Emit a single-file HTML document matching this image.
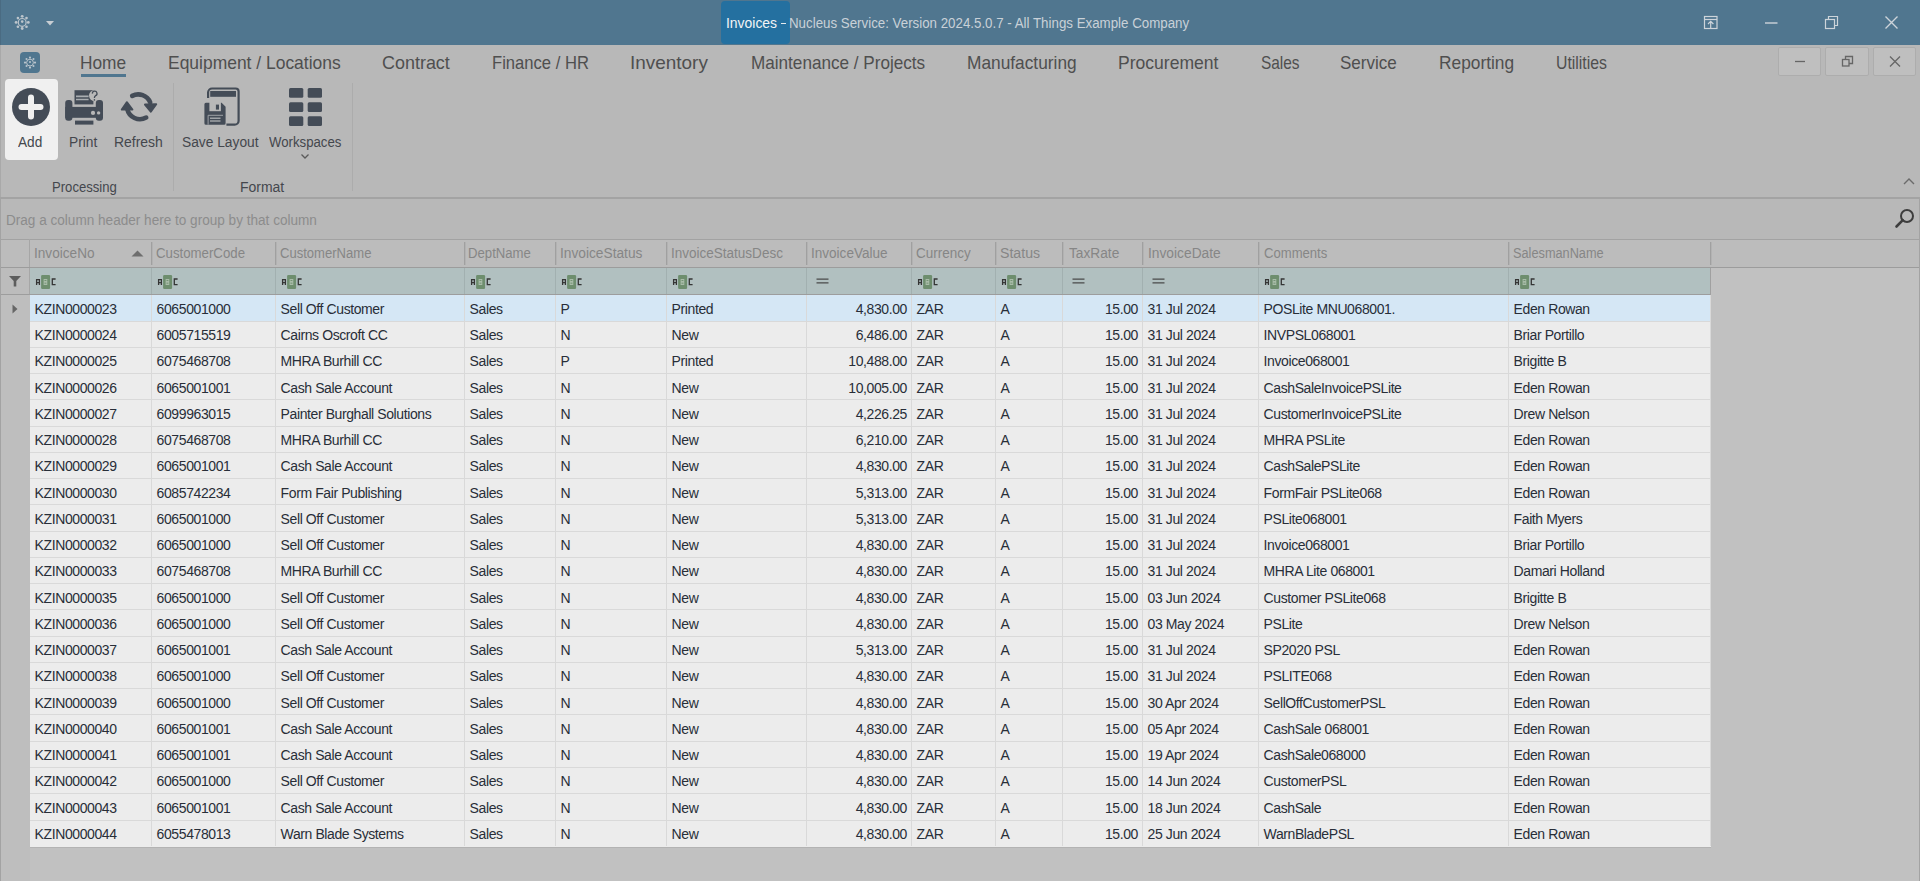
<!DOCTYPE html>
<html><head><meta charset="utf-8"><style>
html,body{margin:0;padding:0;}
body{width:1920px;height:881px;overflow:hidden;position:relative;background:#b8b8b8;font-family:"Liberation Sans",sans-serif;}
.a{position:absolute;}
.t{position:absolute;white-space:pre;line-height:1;}
.tab{font-size:18.2px;color:#4a4a4a;letter-spacing:0px;}
.cell{font-size:14px;color:#282e38;letter-spacing:-0.4px;}
.hdr{font-size:14px;color:#8a8a8a;letter-spacing:-0.12px;}
.lbl{font-size:14px;color:#44474d;letter-spacing:-0.3px;}
</style></head><body>

<div class="a" style="left:0;top:0;width:1920px;height:45px;background:#50768f;"></div>
<div class="a" style="left:0;top:0;width:1px;height:45px;background:#4a6b82;"></div>
<svg class="a" style="left:14px;top:14px" width="17" height="17" viewBox="0 0 17 17">
<g fill="#bcc5cc">
<circle cx="8.2" cy="2.3" r="1.4"/><circle cx="8.2" cy="14.5" r="1.4"/><circle cx="2.1" cy="8.4" r="1.4"/><circle cx="14.3" cy="8.4" r="1.4"/>
<circle cx="3.9" cy="4.1" r="1.3"/><circle cx="12.5" cy="4.1" r="1.3"/><circle cx="3.9" cy="12.7" r="1.3"/><circle cx="12.5" cy="12.7" r="1.3"/>
</g><circle cx="8.2" cy="8.4" r="3.9" fill="none" stroke="#bcc5cc" stroke-width="1.2"/><circle cx="8.2" cy="7.6" r="1.3" fill="#bcc5cc"/>
</svg>
<svg class="a" style="left:46px;top:21px" width="8" height="5" viewBox="0 0 8 5"><path d="M0 0H8L4 4.5Z" fill="#c8ced4"/></svg>
<div class="a" style="left:721px;top:1px;width:69px;height:43px;background:#2470a0;border-radius:4px;"></div>
<div class="t" style="left:726.21px;top:15.5px;font-size:14px;color:#f2f4f6;transform:scaleX(0.9940);transform-origin:0 0;">Invoices</div>
<div class="a" style="left:781px;top:23px;width:5px;height:1.3px;background:#e6eaee;"></div>
<div class="t" style="left:789.05px;top:15.5px;font-size:14px;color:#c9d1d8;transform:scaleX(0.9510);transform-origin:0 0;">Nucleus Service: Version 2024.5.0.7 - All Things Example Company</div>
<svg class="a" style="left:1700px;top:12px" width="210" height="22" viewBox="0 0 210 22">
<g fill="none" stroke="#cdd4da" stroke-width="1.2">
<rect x="4.5" y="4.5" width="12.5" height="12"/><path d="M4.5 7.5H17"/><path d="M10.7 16.5V9.5M8 12L10.7 9.3L13.4 12"/>
<path d="M65 11H77.5" stroke-width="1.4"/>
<rect x="125.5" y="7.5" width="9" height="9"/><path d="M128.5 7.5V4.5H137.5V13.5H134.5"/>
<path d="M185.5 4.5L197.5 16.5M197.5 4.5L185.5 16.5" stroke-width="1.4"/>
</g></svg>
<div class="a" style="left:0;top:45px;width:1px;height:153px;background:#a9a9a9;"></div>
<div class="a" style="left:20px;top:52px;width:20px;height:21px;background:#50768f;border-radius:4px;"></div>
<svg class="a" style="left:23px;top:56px" width="14" height="14" viewBox="0 0 14 14">
<g fill="#b9c4cc"><circle cx="7" cy="1.6" r="1.1"/><circle cx="7" cy="11.6" r="1.1"/><circle cx="2" cy="6.6" r="1.1"/><circle cx="12" cy="6.6" r="1.1"/>
<circle cx="3.5" cy="3.1" r="1"/><circle cx="10.5" cy="3.1" r="1"/><circle cx="3.5" cy="10.1" r="1"/><circle cx="10.5" cy="10.1" r="1"/></g>
<circle cx="7" cy="6.6" r="3.4" fill="none" stroke="#b9c4cc" stroke-width="1"/><circle cx="7" cy="6" r="1" fill="#b9c4cc"/></svg>
<div class="t" style="left:80.35px;top:53.5px;font-size:18.2px;color:#4f4f4f;transform:scaleX(0.9511);transform-origin:0 0;">Home</div>
<div class="t" style="left:168.44px;top:53.5px;font-size:18.2px;color:#4f4f4f;transform:scaleX(0.9596);transform-origin:0 0;">Equipment / Locations</div>
<div class="t" style="left:381.51px;top:53.5px;font-size:18.2px;color:#4f4f4f;transform:scaleX(0.9868);transform-origin:0 0;">Contract</div>
<div class="t" style="left:492.49px;top:53.5px;font-size:18.2px;color:#4f4f4f;transform:scaleX(0.9135);transform-origin:0 0;">Finance / HR</div>
<div class="t" style="left:630.12px;top:53.5px;font-size:18.2px;color:#4f4f4f;transform:scaleX(1.0411);transform-origin:0 0;">Inventory</div>
<div class="t" style="left:750.76px;top:53.5px;font-size:18.2px;color:#4f4f4f;transform:scaleX(0.9413);transform-origin:0 0;">Maintenance / Projects</div>
<div class="t" style="left:966.95px;top:53.5px;font-size:18.2px;color:#4f4f4f;transform:scaleX(0.9513);transform-origin:0 0;">Manufacturing</div>
<div class="t" style="left:1118.23px;top:53.5px;font-size:18.2px;color:#4f4f4f;transform:scaleX(0.9650);transform-origin:0 0;">Procurement</div>
<div class="t" style="left:1260.75px;top:53.5px;font-size:18.2px;color:#4f4f4f;transform:scaleX(0.8477);transform-origin:0 0;">Sales</div>
<div class="t" style="left:1340.06px;top:53.5px;font-size:18.2px;color:#4f4f4f;transform:scaleX(0.9364);transform-origin:0 0;">Service</div>
<div class="t" style="left:1438.75px;top:53.5px;font-size:18.2px;color:#4f4f4f;transform:scaleX(0.9519);transform-origin:0 0;">Reporting</div>
<div class="t" style="left:1556.03px;top:53.5px;font-size:18.2px;color:#4f4f4f;transform:scaleX(0.8684);transform-origin:0 0;">Utilities</div>
<div class="a" style="left:81px;top:74px;width:45px;height:3px;background:#50768f;"></div>
<div class="a" style="left:1778px;top:47px;width:43px;height:29px;background:#bfbfbf;border:1px solid #adadad;border-radius:2px;box-sizing:border-box;"></div>
<div class="a" style="left:1825px;top:47px;width:44px;height:29px;background:#bfbfbf;border:1px solid #adadad;border-radius:2px;box-sizing:border-box;"></div>
<div class="a" style="left:1873px;top:47px;width:43px;height:29px;background:#bfbfbf;border:1px solid #adadad;border-radius:2px;box-sizing:border-box;"></div>
<svg class="a" style="left:1779px;top:47px" width="141" height="28" viewBox="0 0 141 28">
<g fill="none" stroke="#666" stroke-width="1.3">
<path d="M16 14.5H26"/>
<rect x="63.5" y="12.5" width="6.5" height="6.5"/><path d="M66.5 12.5V9.5H73.5V16.5H70"/>
<path d="M111 9.5L121 19.5M121 9.5L111 19.5"/>
</g></svg>
<div class="a" style="left:5px;top:79px;width:53px;height:81px;background:#f0f0f0;border-radius:4px;"></div>
<svg class="a" style="left:12px;top:88px" width="38" height="38" viewBox="0 0 38 38">
<circle cx="19" cy="19" r="19" fill="#444c57"/><path d="M19 9.5V28.5M9.5 19H28.5" stroke="#f0f0f0" stroke-width="6" stroke-linecap="round"/></svg>
<svg class="a" style="left:60px;top:85px" width="50" height="45" viewBox="0 0 50 45">
<path d="M14.5 5.2H33.4V19.4H14.5Z" fill="#444c57"/>
<path d="M16 11.3H28.6M16 14.5H28.6" stroke="#a9adb1" stroke-width="1.7"/>
<circle cx="34.6" cy="10.6" r="5.6" fill="#b8b8b8"/>
<path d="M32.4 8.6A2.3 2.3 0 1 1 35.6 10.6Q34.4 11.3 34.4 13" fill="none" stroke="#444c57" stroke-width="1.3"/>
<circle cx="34.4" cy="14.9" r="0.8" fill="#444c57"/>
<rect x="5.2" y="15" width="7.2" height="20.8" rx="3" fill="#444c57"/>
<rect x="35.8" y="15" width="7.2" height="20.8" rx="3" fill="#444c57"/>
<rect x="5.2" y="21.9" width="37.8" height="10.9" fill="#444c57"/>
<circle cx="33" cy="27.9" r="2.1" fill="#b8b8b8"/><circle cx="38.6" cy="27.9" r="1.7" fill="#b8b8b8"/>
<rect x="15" y="35.6" width="18.4" height="4" fill="#444c57"/>
</svg>
<svg class="a" style="left:60px;top:85px" width="105" height="45" viewBox="0 0 105 45">
<g fill="none" stroke="#444c57" stroke-width="4.6" stroke-linecap="round">
<path d="M72.2 10.9A13 13 0 0 1 90.2 17.4"/>
<path d="M86.2 32.6A13 13 0 0 1 67.2 23.8"/>
</g>
<path d="M85 19.6L96.2 19.2L90.8 26.6Z" fill="#444c57" stroke="#444c57" stroke-width="2" stroke-linejoin="round"/>
<path d="M61.8 24.6L72.4 24.6L66.8 17.2Z" fill="#444c57" stroke="#444c57" stroke-width="2" stroke-linejoin="round"/>
</svg>
<svg class="a" style="left:200px;top:84px" width="45" height="46" viewBox="0 0 45 46">
<path d="M8.1 14.1V8.5A4 4 0 0 1 12.1 4.5H35.6A3 3 0 0 1 38.6 7.5V36.7A4 4 0 0 1 34.6 40.7H26.4" fill="none" stroke="#444c57" stroke-width="2.2"/>
<rect x="10.2" y="7" width="25.8" height="5.8" fill="#444c57"/>
<path d="M5.9 18.8H21.6L25.6 22.8V39.2A1.5 1.5 0 0 1 24.1 40.7H5.9A1.5 1.5 0 0 1 4.4 39.2V20.3A1.5 1.5 0 0 1 5.9 18.8Z" fill="#444c57"/>
<rect x="9.4" y="18" width="11.5" height="9.2" fill="#b8b8b8"/>
<rect x="15.9" y="20.6" width="3.1" height="5" fill="#444c57"/>
<path d="M8.1 40.7V31.3H23" fill="none" stroke="#9ea2a6" stroke-width="1"/>
<path d="M10 34.2H20.5M10 37H20.5" stroke="#9ea2a6" stroke-width="1.4"/>
</svg>
<svg class="a" style="left:289px;top:88px" width="34" height="38" viewBox="0 0 34 38">
<g fill="#444c57"><rect x="0" y="0" width="14.3" height="9.7" rx="1.5"/><rect x="18.7" y="0" width="14.3" height="9.7" rx="1.5"/>
<rect x="0" y="14.2" width="14.3" height="9.7" rx="1.5"/><rect x="18.7" y="14.2" width="14.3" height="9.7" rx="1.5"/>
<rect x="0" y="28.3" width="14.3" height="9.7" rx="1.5"/><rect x="18.7" y="28.3" width="14.3" height="9.7" rx="1.5"/></g></svg>
<svg class="a" style="left:300px;top:153px" width="10" height="7" viewBox="0 0 10 7"><path d="M1.5 1.5L5 5L8.5 1.5" fill="none" stroke="#5a5a5a" stroke-width="1.3"/></svg>
<div class="t" style="left:18.40px;top:135px;font-size:14px;color:#44474d;transform:scaleX(0.9750);transform-origin:0 0;">Add</div>
<div class="t" style="left:68.52px;top:135px;font-size:14px;color:#44474d;transform:scaleX(0.9821);transform-origin:0 0;">Print</div>
<div class="t" style="left:113.60px;top:135px;font-size:14px;color:#44474d;transform:scaleX(0.9957);transform-origin:0 0;">Refresh</div>
<div class="t" style="left:182.02px;top:135px;font-size:14px;color:#44474d;transform:scaleX(0.9831);transform-origin:0 0;">Save Layout</div>
<div class="t" style="left:268.60px;top:135px;font-size:14px;color:#44474d;transform:scaleX(0.9421);transform-origin:0 0;">Workspaces</div>
<div class="t" style="left:52.06px;top:180px;font-size:14px;color:#44474d;transform:scaleX(0.9353);transform-origin:0 0;">Processing</div>
<div class="t" style="left:239.60px;top:180px;font-size:14px;color:#44474d;transform:scaleX(0.9977);transform-origin:0 0;">Format</div>
<div class="a" style="left:173px;top:83px;width:1px;height:108px;background:#acacac;"></div>
<div class="a" style="left:352px;top:83px;width:1px;height:108px;background:#acacac;"></div>
<svg class="a" style="left:1902px;top:176px" width="14" height="10" viewBox="0 0 14 10"><path d="M2 8L7 3L12 8" fill="none" stroke="#6b6b6b" stroke-width="1.4"/></svg>
<div class="a" style="left:0;top:197px;width:1920px;height:2px;background:#a3a3a3;"></div>
<div class="a" style="left:0;top:199px;width:1px;height:682px;background:#a3a3a3;"></div>
<div class="a" style="left:1919px;top:199px;width:1px;height:682px;background:#a3a3a3;"></div>
<div class="t" style="left:5.73px;top:212.5px;font-size:14px;color:#8c8c8c;transform:scaleX(0.9696);transform-origin:0 0;">Drag a column header here to group by that column</div>
<svg class="a" style="left:1893px;top:207px" width="24" height="24" viewBox="0 0 24 24">
<circle cx="14" cy="9" r="6" fill="none" stroke="#3d3d3d" stroke-width="2"/><path d="M9.8 13.2L3.5 19.5" stroke="#3d3d3d" stroke-width="2.6" stroke-linecap="round"/></svg>
<div class="a" style="left:1px;top:239px;width:1918px;height:1px;background:#a2a2a2;"></div>
<div class="a" style="left:1px;top:240px;width:1918px;height:27px;background:#bcbcbc;"></div>
<div class="a" style="left:1px;top:267px;width:1918px;height:1px;background:#9c9c9c;"></div>
<div class="a" style="left:29px;top:239px;width:1px;height:28px;background:#a6a6a6;"></div>
<div class="t" style="left:33.63px;top:246.3px;font-size:14px;color:#868686;transform:scaleX(0.9738);transform-origin:0 0;">InvoiceNo</div>
<div class="t" style="left:156.15px;top:246.3px;font-size:14px;color:#868686;transform:scaleX(0.9452);transform-origin:0 0;">CustomerCode</div>
<div class="t" style="left:279.77px;top:246.3px;font-size:14px;color:#868686;transform:scaleX(0.9330);transform-origin:0 0;">CustomerName</div>
<div class="t" style="left:468.26px;top:246.3px;font-size:14px;color:#868686;transform:scaleX(0.9394);transform-origin:0 0;">DeptName</div>
<div class="t" style="left:560.12px;top:246.3px;font-size:14px;color:#868686;transform:scaleX(0.9807);transform-origin:0 0;">InvoiceStatus</div>
<div class="t" style="left:671.23px;top:246.3px;font-size:14px;color:#868686;transform:scaleX(0.9652);transform-origin:0 0;">InvoiceStatusDesc</div>
<div class="t" style="left:810.93px;top:246.3px;font-size:14px;color:#868686;transform:scaleX(0.9679);transform-origin:0 0;">InvoiceValue</div>
<div class="t" style="left:916.34px;top:246.3px;font-size:14px;color:#868686;transform:scaleX(0.9625);transform-origin:0 0;">Currency</div>
<div class="t" style="left:999.79px;top:246.3px;font-size:14px;color:#868686;transform:scaleX(1.0105);transform-origin:0 0;">Status</div>
<div class="t" style="left:1068.70px;top:246.3px;font-size:14px;color:#868686;transform:scaleX(0.9784);transform-origin:0 0;">TaxRate</div>
<div class="t" style="left:1147.52px;top:246.3px;font-size:14px;color:#868686;transform:scaleX(0.9836);transform-origin:0 0;">InvoiceDate</div>
<div class="t" style="left:1263.67px;top:246.3px;font-size:14px;color:#868686;transform:scaleX(0.9348);transform-origin:0 0;">Comments</div>
<div class="t" style="left:1513.39px;top:246.3px;font-size:14px;color:#868686;transform:scaleX(0.9102);transform-origin:0 0;">SalesmanName</div>
<div class="a" style="left:151px;top:242px;width:1px;height:23px;background:#a0a0a0;"></div>
<div class="a" style="left:152px;top:242px;width:1px;height:23px;background:#b2b2b2;"></div>
<div class="a" style="left:275px;top:242px;width:1px;height:23px;background:#a0a0a0;"></div>
<div class="a" style="left:276px;top:242px;width:1px;height:23px;background:#b2b2b2;"></div>
<div class="a" style="left:464px;top:242px;width:1px;height:23px;background:#a0a0a0;"></div>
<div class="a" style="left:465px;top:242px;width:1px;height:23px;background:#b2b2b2;"></div>
<div class="a" style="left:555px;top:242px;width:1px;height:23px;background:#a0a0a0;"></div>
<div class="a" style="left:556px;top:242px;width:1px;height:23px;background:#b2b2b2;"></div>
<div class="a" style="left:666px;top:242px;width:1px;height:23px;background:#a0a0a0;"></div>
<div class="a" style="left:667px;top:242px;width:1px;height:23px;background:#b2b2b2;"></div>
<div class="a" style="left:806px;top:242px;width:1px;height:23px;background:#a0a0a0;"></div>
<div class="a" style="left:807px;top:242px;width:1px;height:23px;background:#b2b2b2;"></div>
<div class="a" style="left:911px;top:242px;width:1px;height:23px;background:#a0a0a0;"></div>
<div class="a" style="left:912px;top:242px;width:1px;height:23px;background:#b2b2b2;"></div>
<div class="a" style="left:995px;top:242px;width:1px;height:23px;background:#a0a0a0;"></div>
<div class="a" style="left:996px;top:242px;width:1px;height:23px;background:#b2b2b2;"></div>
<div class="a" style="left:1062px;top:242px;width:1px;height:23px;background:#a0a0a0;"></div>
<div class="a" style="left:1063px;top:242px;width:1px;height:23px;background:#b2b2b2;"></div>
<div class="a" style="left:1142px;top:242px;width:1px;height:23px;background:#a0a0a0;"></div>
<div class="a" style="left:1143px;top:242px;width:1px;height:23px;background:#b2b2b2;"></div>
<div class="a" style="left:1258px;top:242px;width:1px;height:23px;background:#a0a0a0;"></div>
<div class="a" style="left:1259px;top:242px;width:1px;height:23px;background:#b2b2b2;"></div>
<div class="a" style="left:1508px;top:242px;width:1px;height:23px;background:#a0a0a0;"></div>
<div class="a" style="left:1509px;top:242px;width:1px;height:23px;background:#b2b2b2;"></div>
<div class="a" style="left:1710px;top:242px;width:1px;height:23px;background:#a0a0a0;"></div>
<div class="a" style="left:1711px;top:242px;width:1px;height:23px;background:#b2b2b2;"></div>
<svg class="a" style="left:131px;top:250px" width="13" height="7" viewBox="0 0 13 7"><path d="M0.5 6.5L6.5 0.5L12.5 6.5Z" fill="#6e6e6e"/></svg>
<div class="a" style="left:1px;top:268px;width:28px;height:26px;background:#bcbcbc;"></div>
<div class="a" style="left:29px;top:268px;width:1px;height:26px;background:#a6a6a6;"></div>
<div class="a" style="left:30px;top:268px;width:1681px;height:26px;background:#b1c0c0;"></div>
<div class="a" style="left:1px;top:294px;width:1710px;height:1px;background:#9d9d9d;"></div>
<svg class="a" style="left:9px;top:276px" width="12" height="11" viewBox="0 0 12 11"><path d="M0 0H12L7.3 5V10.5H4.7V5Z" fill="#5d5d5d"/></svg>

<svg class="a" style="left:35px;top:274px" width="22" height="16" viewBox="0 0 22 16">
<rect x="6.1" y="1" width="9" height="14" rx="1.2" fill="#6e8e6e"/>
<rect x="8.6" y="5" width="3.7" height="6" fill="#a9bca9"/>
<path d="M9.5 6.5H11.4M9.5 9.2H11.4" stroke="#6e8e6e" stroke-width="0.9"/>
<path d="M1.6 11V5.6H4.4V11M1.6 8.6H4.4" fill="none" stroke="#353535" stroke-width="1.3"/>
<path d="M20.6 5H17.3V10.6H20.6" fill="none" stroke="#353535" stroke-width="1.3"/>
</svg>
<div class="a" style="left:151px;top:268px;width:1px;height:26px;background:#a2b0b0;"></div>
<svg class="a" style="left:157px;top:274px" width="22" height="16" viewBox="0 0 22 16">
<rect x="6.1" y="1" width="9" height="14" rx="1.2" fill="#6e8e6e"/>
<rect x="8.6" y="5" width="3.7" height="6" fill="#a9bca9"/>
<path d="M9.5 6.5H11.4M9.5 9.2H11.4" stroke="#6e8e6e" stroke-width="0.9"/>
<path d="M1.6 11V5.6H4.4V11M1.6 8.6H4.4" fill="none" stroke="#353535" stroke-width="1.3"/>
<path d="M20.6 5H17.3V10.6H20.6" fill="none" stroke="#353535" stroke-width="1.3"/>
</svg>
<div class="a" style="left:275px;top:268px;width:1px;height:26px;background:#a2b0b0;"></div>
<svg class="a" style="left:281px;top:274px" width="22" height="16" viewBox="0 0 22 16">
<rect x="6.1" y="1" width="9" height="14" rx="1.2" fill="#6e8e6e"/>
<rect x="8.6" y="5" width="3.7" height="6" fill="#a9bca9"/>
<path d="M9.5 6.5H11.4M9.5 9.2H11.4" stroke="#6e8e6e" stroke-width="0.9"/>
<path d="M1.6 11V5.6H4.4V11M1.6 8.6H4.4" fill="none" stroke="#353535" stroke-width="1.3"/>
<path d="M20.6 5H17.3V10.6H20.6" fill="none" stroke="#353535" stroke-width="1.3"/>
</svg>
<div class="a" style="left:464px;top:268px;width:1px;height:26px;background:#a2b0b0;"></div>
<svg class="a" style="left:470px;top:274px" width="22" height="16" viewBox="0 0 22 16">
<rect x="6.1" y="1" width="9" height="14" rx="1.2" fill="#6e8e6e"/>
<rect x="8.6" y="5" width="3.7" height="6" fill="#a9bca9"/>
<path d="M9.5 6.5H11.4M9.5 9.2H11.4" stroke="#6e8e6e" stroke-width="0.9"/>
<path d="M1.6 11V5.6H4.4V11M1.6 8.6H4.4" fill="none" stroke="#353535" stroke-width="1.3"/>
<path d="M20.6 5H17.3V10.6H20.6" fill="none" stroke="#353535" stroke-width="1.3"/>
</svg>
<div class="a" style="left:555px;top:268px;width:1px;height:26px;background:#a2b0b0;"></div>
<svg class="a" style="left:561px;top:274px" width="22" height="16" viewBox="0 0 22 16">
<rect x="6.1" y="1" width="9" height="14" rx="1.2" fill="#6e8e6e"/>
<rect x="8.6" y="5" width="3.7" height="6" fill="#a9bca9"/>
<path d="M9.5 6.5H11.4M9.5 9.2H11.4" stroke="#6e8e6e" stroke-width="0.9"/>
<path d="M1.6 11V5.6H4.4V11M1.6 8.6H4.4" fill="none" stroke="#353535" stroke-width="1.3"/>
<path d="M20.6 5H17.3V10.6H20.6" fill="none" stroke="#353535" stroke-width="1.3"/>
</svg>
<div class="a" style="left:666px;top:268px;width:1px;height:26px;background:#a2b0b0;"></div>
<svg class="a" style="left:672px;top:274px" width="22" height="16" viewBox="0 0 22 16">
<rect x="6.1" y="1" width="9" height="14" rx="1.2" fill="#6e8e6e"/>
<rect x="8.6" y="5" width="3.7" height="6" fill="#a9bca9"/>
<path d="M9.5 6.5H11.4M9.5 9.2H11.4" stroke="#6e8e6e" stroke-width="0.9"/>
<path d="M1.6 11V5.6H4.4V11M1.6 8.6H4.4" fill="none" stroke="#353535" stroke-width="1.3"/>
<path d="M20.6 5H17.3V10.6H20.6" fill="none" stroke="#353535" stroke-width="1.3"/>
</svg>
<div class="a" style="left:806px;top:268px;width:1px;height:26px;background:#a2b0b0;"></div>
<svg class="a" style="left:816px;top:278px" width="13" height="6" viewBox="0 0 13 6"><path d="M0.5 1.2H12.5M0.5 4.8H12.5" stroke="#4a4a4a" stroke-width="1.3"/></svg>
<div class="a" style="left:911px;top:268px;width:1px;height:26px;background:#a2b0b0;"></div>
<svg class="a" style="left:917px;top:274px" width="22" height="16" viewBox="0 0 22 16">
<rect x="6.1" y="1" width="9" height="14" rx="1.2" fill="#6e8e6e"/>
<rect x="8.6" y="5" width="3.7" height="6" fill="#a9bca9"/>
<path d="M9.5 6.5H11.4M9.5 9.2H11.4" stroke="#6e8e6e" stroke-width="0.9"/>
<path d="M1.6 11V5.6H4.4V11M1.6 8.6H4.4" fill="none" stroke="#353535" stroke-width="1.3"/>
<path d="M20.6 5H17.3V10.6H20.6" fill="none" stroke="#353535" stroke-width="1.3"/>
</svg>
<div class="a" style="left:995px;top:268px;width:1px;height:26px;background:#a2b0b0;"></div>
<svg class="a" style="left:1001px;top:274px" width="22" height="16" viewBox="0 0 22 16">
<rect x="6.1" y="1" width="9" height="14" rx="1.2" fill="#6e8e6e"/>
<rect x="8.6" y="5" width="3.7" height="6" fill="#a9bca9"/>
<path d="M9.5 6.5H11.4M9.5 9.2H11.4" stroke="#6e8e6e" stroke-width="0.9"/>
<path d="M1.6 11V5.6H4.4V11M1.6 8.6H4.4" fill="none" stroke="#353535" stroke-width="1.3"/>
<path d="M20.6 5H17.3V10.6H20.6" fill="none" stroke="#353535" stroke-width="1.3"/>
</svg>
<div class="a" style="left:1062px;top:268px;width:1px;height:26px;background:#a2b0b0;"></div>
<svg class="a" style="left:1072px;top:278px" width="13" height="6" viewBox="0 0 13 6"><path d="M0.5 1.2H12.5M0.5 4.8H12.5" stroke="#4a4a4a" stroke-width="1.3"/></svg>
<div class="a" style="left:1142px;top:268px;width:1px;height:26px;background:#a2b0b0;"></div>
<svg class="a" style="left:1152px;top:278px" width="13" height="6" viewBox="0 0 13 6"><path d="M0.5 1.2H12.5M0.5 4.8H12.5" stroke="#4a4a4a" stroke-width="1.3"/></svg>
<div class="a" style="left:1258px;top:268px;width:1px;height:26px;background:#a2b0b0;"></div>
<svg class="a" style="left:1264px;top:274px" width="22" height="16" viewBox="0 0 22 16">
<rect x="6.1" y="1" width="9" height="14" rx="1.2" fill="#6e8e6e"/>
<rect x="8.6" y="5" width="3.7" height="6" fill="#a9bca9"/>
<path d="M9.5 6.5H11.4M9.5 9.2H11.4" stroke="#6e8e6e" stroke-width="0.9"/>
<path d="M1.6 11V5.6H4.4V11M1.6 8.6H4.4" fill="none" stroke="#353535" stroke-width="1.3"/>
<path d="M20.6 5H17.3V10.6H20.6" fill="none" stroke="#353535" stroke-width="1.3"/>
</svg>
<div class="a" style="left:1508px;top:268px;width:1px;height:26px;background:#a2b0b0;"></div>
<svg class="a" style="left:1514px;top:274px" width="22" height="16" viewBox="0 0 22 16">
<rect x="6.1" y="1" width="9" height="14" rx="1.2" fill="#6e8e6e"/>
<rect x="8.6" y="5" width="3.7" height="6" fill="#a9bca9"/>
<path d="M9.5 6.5H11.4M9.5 9.2H11.4" stroke="#6e8e6e" stroke-width="0.9"/>
<path d="M1.6 11V5.6H4.4V11M1.6 8.6H4.4" fill="none" stroke="#353535" stroke-width="1.3"/>
<path d="M20.6 5H17.3V10.6H20.6" fill="none" stroke="#353535" stroke-width="1.3"/>
</svg>
<div class="a" style="left:1710px;top:268px;width:1px;height:27px;background:#a0a0a0;"></div>
<div class="a" style="left:1px;top:295px;width:29px;height:586px;background:#bebebe;"></div>
<div class="a" style="left:1711px;top:268px;width:208px;height:613px;background:#c1c1c1;"></div>
<div class="a" style="left:30px;top:847px;width:1681px;height:34px;background:#c1c1c1;"></div>
<div class="a" style="left:30px;top:847px;width:1681px;height:1px;background:#b3b3b3;"></div>
<div class="a" style="left:30px;top:295px;width:1681px;height:27px;background:#d5e7f5;"></div>
<div class="a" style="left:30px;top:322px;width:1681px;height:26px;background:#ececec;"></div>
<div class="a" style="left:30px;top:348px;width:1681px;height:26px;background:#ececec;"></div>
<div class="a" style="left:30px;top:374px;width:1681px;height:26px;background:#ececec;"></div>
<div class="a" style="left:30px;top:400px;width:1681px;height:27px;background:#ececec;"></div>
<div class="a" style="left:30px;top:427px;width:1681px;height:26px;background:#ececec;"></div>
<div class="a" style="left:30px;top:453px;width:1681px;height:26px;background:#ececec;"></div>
<div class="a" style="left:30px;top:479px;width:1681px;height:26px;background:#ececec;"></div>
<div class="a" style="left:30px;top:505px;width:1681px;height:27px;background:#ececec;"></div>
<div class="a" style="left:30px;top:532px;width:1681px;height:26px;background:#ececec;"></div>
<div class="a" style="left:30px;top:558px;width:1681px;height:26px;background:#ececec;"></div>
<div class="a" style="left:30px;top:584px;width:1681px;height:26px;background:#ececec;"></div>
<div class="a" style="left:30px;top:610px;width:1681px;height:27px;background:#ececec;"></div>
<div class="a" style="left:30px;top:637px;width:1681px;height:26px;background:#ececec;"></div>
<div class="a" style="left:30px;top:663px;width:1681px;height:26px;background:#ececec;"></div>
<div class="a" style="left:30px;top:689px;width:1681px;height:26px;background:#ececec;"></div>
<div class="a" style="left:30px;top:715px;width:1681px;height:27px;background:#ececec;"></div>
<div class="a" style="left:30px;top:742px;width:1681px;height:26px;background:#ececec;"></div>
<div class="a" style="left:30px;top:768px;width:1681px;height:26px;background:#ececec;"></div>
<div class="a" style="left:30px;top:794px;width:1681px;height:27px;background:#ececec;"></div>
<div class="a" style="left:30px;top:821px;width:1681px;height:26px;background:#ececec;"></div>
<div class="a" style="left:30px;top:321px;width:1681px;height:1px;background:#d9d9d9;"></div>
<div class="a" style="left:30px;top:347px;width:1681px;height:1px;background:#d9d9d9;"></div>
<div class="a" style="left:30px;top:373px;width:1681px;height:1px;background:#d9d9d9;"></div>
<div class="a" style="left:30px;top:399px;width:1681px;height:1px;background:#d9d9d9;"></div>
<div class="a" style="left:30px;top:426px;width:1681px;height:1px;background:#d9d9d9;"></div>
<div class="a" style="left:30px;top:452px;width:1681px;height:1px;background:#d9d9d9;"></div>
<div class="a" style="left:30px;top:478px;width:1681px;height:1px;background:#d9d9d9;"></div>
<div class="a" style="left:30px;top:504px;width:1681px;height:1px;background:#d9d9d9;"></div>
<div class="a" style="left:30px;top:531px;width:1681px;height:1px;background:#d9d9d9;"></div>
<div class="a" style="left:30px;top:557px;width:1681px;height:1px;background:#d9d9d9;"></div>
<div class="a" style="left:30px;top:583px;width:1681px;height:1px;background:#d9d9d9;"></div>
<div class="a" style="left:30px;top:609px;width:1681px;height:1px;background:#d9d9d9;"></div>
<div class="a" style="left:30px;top:636px;width:1681px;height:1px;background:#d9d9d9;"></div>
<div class="a" style="left:30px;top:662px;width:1681px;height:1px;background:#d9d9d9;"></div>
<div class="a" style="left:30px;top:688px;width:1681px;height:1px;background:#d9d9d9;"></div>
<div class="a" style="left:30px;top:714px;width:1681px;height:1px;background:#d9d9d9;"></div>
<div class="a" style="left:30px;top:741px;width:1681px;height:1px;background:#d9d9d9;"></div>
<div class="a" style="left:30px;top:767px;width:1681px;height:1px;background:#d9d9d9;"></div>
<div class="a" style="left:30px;top:793px;width:1681px;height:1px;background:#d9d9d9;"></div>
<div class="a" style="left:30px;top:820px;width:1681px;height:1px;background:#d9d9d9;"></div>
<div class="t cell" style="left:34.6px;top:301.80px;">KZIN0000023</div>
<div class="t cell" style="left:156.6px;top:301.80px;">6065001000</div>
<div class="t cell" style="left:280.6px;top:301.80px;">Sell Off Customer</div>
<div class="t cell" style="left:469.6px;top:301.80px;">Sales</div>
<div class="t cell" style="left:560.6px;top:301.80px;">P</div>
<div class="t cell" style="left:671.6px;top:301.80px;">Printed</div>
<div class="t cell" style="left:807px;width:100px;text-align:right;top:301.80px;">4,830.00</div>
<div class="t cell" style="left:916.6px;top:301.80px;">ZAR</div>
<div class="t cell" style="left:1000.6px;top:301.80px;">A</div>
<div class="t cell" style="left:1063px;width:75px;text-align:right;top:301.80px;">15.00</div>
<div class="t cell" style="left:1147.6px;top:301.80px;">31 Jul 2024</div>
<div class="t cell" style="left:1263.6px;top:301.80px;">POSLite MNU068001.</div>
<div class="t cell" style="left:1513.6px;top:301.80px;">Eden Rowan</div>
<div class="t cell" style="left:34.6px;top:328.05px;">KZIN0000024</div>
<div class="t cell" style="left:156.6px;top:328.05px;">6005715519</div>
<div class="t cell" style="left:280.6px;top:328.05px;">Cairns Oscroft CC</div>
<div class="t cell" style="left:469.6px;top:328.05px;">Sales</div>
<div class="t cell" style="left:560.6px;top:328.05px;">N</div>
<div class="t cell" style="left:671.6px;top:328.05px;">New</div>
<div class="t cell" style="left:807px;width:100px;text-align:right;top:328.05px;">6,486.00</div>
<div class="t cell" style="left:916.6px;top:328.05px;">ZAR</div>
<div class="t cell" style="left:1000.6px;top:328.05px;">A</div>
<div class="t cell" style="left:1063px;width:75px;text-align:right;top:328.05px;">15.00</div>
<div class="t cell" style="left:1147.6px;top:328.05px;">31 Jul 2024</div>
<div class="t cell" style="left:1263.6px;top:328.05px;">INVPSL068001</div>
<div class="t cell" style="left:1513.6px;top:328.05px;">Briar Portillo</div>
<div class="t cell" style="left:34.6px;top:354.30px;">KZIN0000025</div>
<div class="t cell" style="left:156.6px;top:354.30px;">6075468708</div>
<div class="t cell" style="left:280.6px;top:354.30px;">MHRA Burhill CC</div>
<div class="t cell" style="left:469.6px;top:354.30px;">Sales</div>
<div class="t cell" style="left:560.6px;top:354.30px;">P</div>
<div class="t cell" style="left:671.6px;top:354.30px;">Printed</div>
<div class="t cell" style="left:807px;width:100px;text-align:right;top:354.30px;">10,488.00</div>
<div class="t cell" style="left:916.6px;top:354.30px;">ZAR</div>
<div class="t cell" style="left:1000.6px;top:354.30px;">A</div>
<div class="t cell" style="left:1063px;width:75px;text-align:right;top:354.30px;">15.00</div>
<div class="t cell" style="left:1147.6px;top:354.30px;">31 Jul 2024</div>
<div class="t cell" style="left:1263.6px;top:354.30px;">Invoice068001</div>
<div class="t cell" style="left:1513.6px;top:354.30px;">Brigitte B</div>
<div class="t cell" style="left:34.6px;top:380.55px;">KZIN0000026</div>
<div class="t cell" style="left:156.6px;top:380.55px;">6065001001</div>
<div class="t cell" style="left:280.6px;top:380.55px;">Cash Sale Account</div>
<div class="t cell" style="left:469.6px;top:380.55px;">Sales</div>
<div class="t cell" style="left:560.6px;top:380.55px;">N</div>
<div class="t cell" style="left:671.6px;top:380.55px;">New</div>
<div class="t cell" style="left:807px;width:100px;text-align:right;top:380.55px;">10,005.00</div>
<div class="t cell" style="left:916.6px;top:380.55px;">ZAR</div>
<div class="t cell" style="left:1000.6px;top:380.55px;">A</div>
<div class="t cell" style="left:1063px;width:75px;text-align:right;top:380.55px;">15.00</div>
<div class="t cell" style="left:1147.6px;top:380.55px;">31 Jul 2024</div>
<div class="t cell" style="left:1263.6px;top:380.55px;">CashSaleInvoicePSLite</div>
<div class="t cell" style="left:1513.6px;top:380.55px;">Eden Rowan</div>
<div class="t cell" style="left:34.6px;top:406.80px;">KZIN0000027</div>
<div class="t cell" style="left:156.6px;top:406.80px;">6099963015</div>
<div class="t cell" style="left:280.6px;top:406.80px;">Painter Burghall Solutions</div>
<div class="t cell" style="left:469.6px;top:406.80px;">Sales</div>
<div class="t cell" style="left:560.6px;top:406.80px;">N</div>
<div class="t cell" style="left:671.6px;top:406.80px;">New</div>
<div class="t cell" style="left:807px;width:100px;text-align:right;top:406.80px;">4,226.25</div>
<div class="t cell" style="left:916.6px;top:406.80px;">ZAR</div>
<div class="t cell" style="left:1000.6px;top:406.80px;">A</div>
<div class="t cell" style="left:1063px;width:75px;text-align:right;top:406.80px;">15.00</div>
<div class="t cell" style="left:1147.6px;top:406.80px;">31 Jul 2024</div>
<div class="t cell" style="left:1263.6px;top:406.80px;">CustomerInvoicePSLite</div>
<div class="t cell" style="left:1513.6px;top:406.80px;">Drew Nelson</div>
<div class="t cell" style="left:34.6px;top:433.05px;">KZIN0000028</div>
<div class="t cell" style="left:156.6px;top:433.05px;">6075468708</div>
<div class="t cell" style="left:280.6px;top:433.05px;">MHRA Burhill CC</div>
<div class="t cell" style="left:469.6px;top:433.05px;">Sales</div>
<div class="t cell" style="left:560.6px;top:433.05px;">N</div>
<div class="t cell" style="left:671.6px;top:433.05px;">New</div>
<div class="t cell" style="left:807px;width:100px;text-align:right;top:433.05px;">6,210.00</div>
<div class="t cell" style="left:916.6px;top:433.05px;">ZAR</div>
<div class="t cell" style="left:1000.6px;top:433.05px;">A</div>
<div class="t cell" style="left:1063px;width:75px;text-align:right;top:433.05px;">15.00</div>
<div class="t cell" style="left:1147.6px;top:433.05px;">31 Jul 2024</div>
<div class="t cell" style="left:1263.6px;top:433.05px;">MHRA PSLite</div>
<div class="t cell" style="left:1513.6px;top:433.05px;">Eden Rowan</div>
<div class="t cell" style="left:34.6px;top:459.30px;">KZIN0000029</div>
<div class="t cell" style="left:156.6px;top:459.30px;">6065001001</div>
<div class="t cell" style="left:280.6px;top:459.30px;">Cash Sale Account</div>
<div class="t cell" style="left:469.6px;top:459.30px;">Sales</div>
<div class="t cell" style="left:560.6px;top:459.30px;">N</div>
<div class="t cell" style="left:671.6px;top:459.30px;">New</div>
<div class="t cell" style="left:807px;width:100px;text-align:right;top:459.30px;">4,830.00</div>
<div class="t cell" style="left:916.6px;top:459.30px;">ZAR</div>
<div class="t cell" style="left:1000.6px;top:459.30px;">A</div>
<div class="t cell" style="left:1063px;width:75px;text-align:right;top:459.30px;">15.00</div>
<div class="t cell" style="left:1147.6px;top:459.30px;">31 Jul 2024</div>
<div class="t cell" style="left:1263.6px;top:459.30px;">CashSalePSLite</div>
<div class="t cell" style="left:1513.6px;top:459.30px;">Eden Rowan</div>
<div class="t cell" style="left:34.6px;top:485.55px;">KZIN0000030</div>
<div class="t cell" style="left:156.6px;top:485.55px;">6085742234</div>
<div class="t cell" style="left:280.6px;top:485.55px;">Form Fair Publishing</div>
<div class="t cell" style="left:469.6px;top:485.55px;">Sales</div>
<div class="t cell" style="left:560.6px;top:485.55px;">N</div>
<div class="t cell" style="left:671.6px;top:485.55px;">New</div>
<div class="t cell" style="left:807px;width:100px;text-align:right;top:485.55px;">5,313.00</div>
<div class="t cell" style="left:916.6px;top:485.55px;">ZAR</div>
<div class="t cell" style="left:1000.6px;top:485.55px;">A</div>
<div class="t cell" style="left:1063px;width:75px;text-align:right;top:485.55px;">15.00</div>
<div class="t cell" style="left:1147.6px;top:485.55px;">31 Jul 2024</div>
<div class="t cell" style="left:1263.6px;top:485.55px;">FormFair PSLite068</div>
<div class="t cell" style="left:1513.6px;top:485.55px;">Eden Rowan</div>
<div class="t cell" style="left:34.6px;top:511.80px;">KZIN0000031</div>
<div class="t cell" style="left:156.6px;top:511.80px;">6065001000</div>
<div class="t cell" style="left:280.6px;top:511.80px;">Sell Off Customer</div>
<div class="t cell" style="left:469.6px;top:511.80px;">Sales</div>
<div class="t cell" style="left:560.6px;top:511.80px;">N</div>
<div class="t cell" style="left:671.6px;top:511.80px;">New</div>
<div class="t cell" style="left:807px;width:100px;text-align:right;top:511.80px;">5,313.00</div>
<div class="t cell" style="left:916.6px;top:511.80px;">ZAR</div>
<div class="t cell" style="left:1000.6px;top:511.80px;">A</div>
<div class="t cell" style="left:1063px;width:75px;text-align:right;top:511.80px;">15.00</div>
<div class="t cell" style="left:1147.6px;top:511.80px;">31 Jul 2024</div>
<div class="t cell" style="left:1263.6px;top:511.80px;">PSLite068001</div>
<div class="t cell" style="left:1513.6px;top:511.80px;">Faith Myers</div>
<div class="t cell" style="left:34.6px;top:538.05px;">KZIN0000032</div>
<div class="t cell" style="left:156.6px;top:538.05px;">6065001000</div>
<div class="t cell" style="left:280.6px;top:538.05px;">Sell Off Customer</div>
<div class="t cell" style="left:469.6px;top:538.05px;">Sales</div>
<div class="t cell" style="left:560.6px;top:538.05px;">N</div>
<div class="t cell" style="left:671.6px;top:538.05px;">New</div>
<div class="t cell" style="left:807px;width:100px;text-align:right;top:538.05px;">4,830.00</div>
<div class="t cell" style="left:916.6px;top:538.05px;">ZAR</div>
<div class="t cell" style="left:1000.6px;top:538.05px;">A</div>
<div class="t cell" style="left:1063px;width:75px;text-align:right;top:538.05px;">15.00</div>
<div class="t cell" style="left:1147.6px;top:538.05px;">31 Jul 2024</div>
<div class="t cell" style="left:1263.6px;top:538.05px;">Invoice068001</div>
<div class="t cell" style="left:1513.6px;top:538.05px;">Briar Portillo</div>
<div class="t cell" style="left:34.6px;top:564.30px;">KZIN0000033</div>
<div class="t cell" style="left:156.6px;top:564.30px;">6075468708</div>
<div class="t cell" style="left:280.6px;top:564.30px;">MHRA Burhill CC</div>
<div class="t cell" style="left:469.6px;top:564.30px;">Sales</div>
<div class="t cell" style="left:560.6px;top:564.30px;">N</div>
<div class="t cell" style="left:671.6px;top:564.30px;">New</div>
<div class="t cell" style="left:807px;width:100px;text-align:right;top:564.30px;">4,830.00</div>
<div class="t cell" style="left:916.6px;top:564.30px;">ZAR</div>
<div class="t cell" style="left:1000.6px;top:564.30px;">A</div>
<div class="t cell" style="left:1063px;width:75px;text-align:right;top:564.30px;">15.00</div>
<div class="t cell" style="left:1147.6px;top:564.30px;">31 Jul 2024</div>
<div class="t cell" style="left:1263.6px;top:564.30px;">MHRA Lite 068001</div>
<div class="t cell" style="left:1513.6px;top:564.30px;">Damari Holland</div>
<div class="t cell" style="left:34.6px;top:590.55px;">KZIN0000035</div>
<div class="t cell" style="left:156.6px;top:590.55px;">6065001000</div>
<div class="t cell" style="left:280.6px;top:590.55px;">Sell Off Customer</div>
<div class="t cell" style="left:469.6px;top:590.55px;">Sales</div>
<div class="t cell" style="left:560.6px;top:590.55px;">N</div>
<div class="t cell" style="left:671.6px;top:590.55px;">New</div>
<div class="t cell" style="left:807px;width:100px;text-align:right;top:590.55px;">4,830.00</div>
<div class="t cell" style="left:916.6px;top:590.55px;">ZAR</div>
<div class="t cell" style="left:1000.6px;top:590.55px;">A</div>
<div class="t cell" style="left:1063px;width:75px;text-align:right;top:590.55px;">15.00</div>
<div class="t cell" style="left:1147.6px;top:590.55px;">03 Jun 2024</div>
<div class="t cell" style="left:1263.6px;top:590.55px;">Customer PSLite068</div>
<div class="t cell" style="left:1513.6px;top:590.55px;">Brigitte B</div>
<div class="t cell" style="left:34.6px;top:616.80px;">KZIN0000036</div>
<div class="t cell" style="left:156.6px;top:616.80px;">6065001000</div>
<div class="t cell" style="left:280.6px;top:616.80px;">Sell Off Customer</div>
<div class="t cell" style="left:469.6px;top:616.80px;">Sales</div>
<div class="t cell" style="left:560.6px;top:616.80px;">N</div>
<div class="t cell" style="left:671.6px;top:616.80px;">New</div>
<div class="t cell" style="left:807px;width:100px;text-align:right;top:616.80px;">4,830.00</div>
<div class="t cell" style="left:916.6px;top:616.80px;">ZAR</div>
<div class="t cell" style="left:1000.6px;top:616.80px;">A</div>
<div class="t cell" style="left:1063px;width:75px;text-align:right;top:616.80px;">15.00</div>
<div class="t cell" style="left:1147.6px;top:616.80px;">03 May 2024</div>
<div class="t cell" style="left:1263.6px;top:616.80px;">PSLite</div>
<div class="t cell" style="left:1513.6px;top:616.80px;">Drew Nelson</div>
<div class="t cell" style="left:34.6px;top:643.05px;">KZIN0000037</div>
<div class="t cell" style="left:156.6px;top:643.05px;">6065001001</div>
<div class="t cell" style="left:280.6px;top:643.05px;">Cash Sale Account</div>
<div class="t cell" style="left:469.6px;top:643.05px;">Sales</div>
<div class="t cell" style="left:560.6px;top:643.05px;">N</div>
<div class="t cell" style="left:671.6px;top:643.05px;">New</div>
<div class="t cell" style="left:807px;width:100px;text-align:right;top:643.05px;">5,313.00</div>
<div class="t cell" style="left:916.6px;top:643.05px;">ZAR</div>
<div class="t cell" style="left:1000.6px;top:643.05px;">A</div>
<div class="t cell" style="left:1063px;width:75px;text-align:right;top:643.05px;">15.00</div>
<div class="t cell" style="left:1147.6px;top:643.05px;">31 Jul 2024</div>
<div class="t cell" style="left:1263.6px;top:643.05px;">SP2020 PSL</div>
<div class="t cell" style="left:1513.6px;top:643.05px;">Eden Rowan</div>
<div class="t cell" style="left:34.6px;top:669.30px;">KZIN0000038</div>
<div class="t cell" style="left:156.6px;top:669.30px;">6065001000</div>
<div class="t cell" style="left:280.6px;top:669.30px;">Sell Off Customer</div>
<div class="t cell" style="left:469.6px;top:669.30px;">Sales</div>
<div class="t cell" style="left:560.6px;top:669.30px;">N</div>
<div class="t cell" style="left:671.6px;top:669.30px;">New</div>
<div class="t cell" style="left:807px;width:100px;text-align:right;top:669.30px;">4,830.00</div>
<div class="t cell" style="left:916.6px;top:669.30px;">ZAR</div>
<div class="t cell" style="left:1000.6px;top:669.30px;">A</div>
<div class="t cell" style="left:1063px;width:75px;text-align:right;top:669.30px;">15.00</div>
<div class="t cell" style="left:1147.6px;top:669.30px;">31 Jul 2024</div>
<div class="t cell" style="left:1263.6px;top:669.30px;">PSLITE068</div>
<div class="t cell" style="left:1513.6px;top:669.30px;">Eden Rowan</div>
<div class="t cell" style="left:34.6px;top:695.55px;">KZIN0000039</div>
<div class="t cell" style="left:156.6px;top:695.55px;">6065001000</div>
<div class="t cell" style="left:280.6px;top:695.55px;">Sell Off Customer</div>
<div class="t cell" style="left:469.6px;top:695.55px;">Sales</div>
<div class="t cell" style="left:560.6px;top:695.55px;">N</div>
<div class="t cell" style="left:671.6px;top:695.55px;">New</div>
<div class="t cell" style="left:807px;width:100px;text-align:right;top:695.55px;">4,830.00</div>
<div class="t cell" style="left:916.6px;top:695.55px;">ZAR</div>
<div class="t cell" style="left:1000.6px;top:695.55px;">A</div>
<div class="t cell" style="left:1063px;width:75px;text-align:right;top:695.55px;">15.00</div>
<div class="t cell" style="left:1147.6px;top:695.55px;">30 Apr 2024</div>
<div class="t cell" style="left:1263.6px;top:695.55px;">SellOffCustomerPSL</div>
<div class="t cell" style="left:1513.6px;top:695.55px;">Eden Rowan</div>
<div class="t cell" style="left:34.6px;top:721.80px;">KZIN0000040</div>
<div class="t cell" style="left:156.6px;top:721.80px;">6065001001</div>
<div class="t cell" style="left:280.6px;top:721.80px;">Cash Sale Account</div>
<div class="t cell" style="left:469.6px;top:721.80px;">Sales</div>
<div class="t cell" style="left:560.6px;top:721.80px;">N</div>
<div class="t cell" style="left:671.6px;top:721.80px;">New</div>
<div class="t cell" style="left:807px;width:100px;text-align:right;top:721.80px;">4,830.00</div>
<div class="t cell" style="left:916.6px;top:721.80px;">ZAR</div>
<div class="t cell" style="left:1000.6px;top:721.80px;">A</div>
<div class="t cell" style="left:1063px;width:75px;text-align:right;top:721.80px;">15.00</div>
<div class="t cell" style="left:1147.6px;top:721.80px;">05 Apr 2024</div>
<div class="t cell" style="left:1263.6px;top:721.80px;">CashSale 068001</div>
<div class="t cell" style="left:1513.6px;top:721.80px;">Eden Rowan</div>
<div class="t cell" style="left:34.6px;top:748.05px;">KZIN0000041</div>
<div class="t cell" style="left:156.6px;top:748.05px;">6065001001</div>
<div class="t cell" style="left:280.6px;top:748.05px;">Cash Sale Account</div>
<div class="t cell" style="left:469.6px;top:748.05px;">Sales</div>
<div class="t cell" style="left:560.6px;top:748.05px;">N</div>
<div class="t cell" style="left:671.6px;top:748.05px;">New</div>
<div class="t cell" style="left:807px;width:100px;text-align:right;top:748.05px;">4,830.00</div>
<div class="t cell" style="left:916.6px;top:748.05px;">ZAR</div>
<div class="t cell" style="left:1000.6px;top:748.05px;">A</div>
<div class="t cell" style="left:1063px;width:75px;text-align:right;top:748.05px;">15.00</div>
<div class="t cell" style="left:1147.6px;top:748.05px;">19 Apr 2024</div>
<div class="t cell" style="left:1263.6px;top:748.05px;">CashSale068000</div>
<div class="t cell" style="left:1513.6px;top:748.05px;">Eden Rowan</div>
<div class="t cell" style="left:34.6px;top:774.30px;">KZIN0000042</div>
<div class="t cell" style="left:156.6px;top:774.30px;">6065001000</div>
<div class="t cell" style="left:280.6px;top:774.30px;">Sell Off Customer</div>
<div class="t cell" style="left:469.6px;top:774.30px;">Sales</div>
<div class="t cell" style="left:560.6px;top:774.30px;">N</div>
<div class="t cell" style="left:671.6px;top:774.30px;">New</div>
<div class="t cell" style="left:807px;width:100px;text-align:right;top:774.30px;">4,830.00</div>
<div class="t cell" style="left:916.6px;top:774.30px;">ZAR</div>
<div class="t cell" style="left:1000.6px;top:774.30px;">A</div>
<div class="t cell" style="left:1063px;width:75px;text-align:right;top:774.30px;">15.00</div>
<div class="t cell" style="left:1147.6px;top:774.30px;">14 Jun 2024</div>
<div class="t cell" style="left:1263.6px;top:774.30px;">CustomerPSL</div>
<div class="t cell" style="left:1513.6px;top:774.30px;">Eden Rowan</div>
<div class="t cell" style="left:34.6px;top:800.55px;">KZIN0000043</div>
<div class="t cell" style="left:156.6px;top:800.55px;">6065001001</div>
<div class="t cell" style="left:280.6px;top:800.55px;">Cash Sale Account</div>
<div class="t cell" style="left:469.6px;top:800.55px;">Sales</div>
<div class="t cell" style="left:560.6px;top:800.55px;">N</div>
<div class="t cell" style="left:671.6px;top:800.55px;">New</div>
<div class="t cell" style="left:807px;width:100px;text-align:right;top:800.55px;">4,830.00</div>
<div class="t cell" style="left:916.6px;top:800.55px;">ZAR</div>
<div class="t cell" style="left:1000.6px;top:800.55px;">A</div>
<div class="t cell" style="left:1063px;width:75px;text-align:right;top:800.55px;">15.00</div>
<div class="t cell" style="left:1147.6px;top:800.55px;">18 Jun 2024</div>
<div class="t cell" style="left:1263.6px;top:800.55px;">CashSale</div>
<div class="t cell" style="left:1513.6px;top:800.55px;">Eden Rowan</div>
<div class="t cell" style="left:34.6px;top:826.80px;">KZIN0000044</div>
<div class="t cell" style="left:156.6px;top:826.80px;">6055478013</div>
<div class="t cell" style="left:280.6px;top:826.80px;">Warn Blade Systems</div>
<div class="t cell" style="left:469.6px;top:826.80px;">Sales</div>
<div class="t cell" style="left:560.6px;top:826.80px;">N</div>
<div class="t cell" style="left:671.6px;top:826.80px;">New</div>
<div class="t cell" style="left:807px;width:100px;text-align:right;top:826.80px;">4,830.00</div>
<div class="t cell" style="left:916.6px;top:826.80px;">ZAR</div>
<div class="t cell" style="left:1000.6px;top:826.80px;">A</div>
<div class="t cell" style="left:1063px;width:75px;text-align:right;top:826.80px;">15.00</div>
<div class="t cell" style="left:1147.6px;top:826.80px;">25 Jun 2024</div>
<div class="t cell" style="left:1263.6px;top:826.80px;">WarnBladePSL</div>
<div class="t cell" style="left:1513.6px;top:826.80px;">Eden Rowan</div>
<div class="a" style="left:151px;top:295px;width:1px;height:551.25px;background:#d9d9d9;"></div>
<div class="a" style="left:275px;top:295px;width:1px;height:551.25px;background:#d9d9d9;"></div>
<div class="a" style="left:464px;top:295px;width:1px;height:551.25px;background:#d9d9d9;"></div>
<div class="a" style="left:555px;top:295px;width:1px;height:551.25px;background:#d9d9d9;"></div>
<div class="a" style="left:666px;top:295px;width:1px;height:551.25px;background:#d9d9d9;"></div>
<div class="a" style="left:806px;top:295px;width:1px;height:551.25px;background:#d9d9d9;"></div>
<div class="a" style="left:911px;top:295px;width:1px;height:551.25px;background:#d9d9d9;"></div>
<div class="a" style="left:995px;top:295px;width:1px;height:551.25px;background:#d9d9d9;"></div>
<div class="a" style="left:1062px;top:295px;width:1px;height:551.25px;background:#d9d9d9;"></div>
<div class="a" style="left:1142px;top:295px;width:1px;height:551.25px;background:#d9d9d9;"></div>
<div class="a" style="left:1258px;top:295px;width:1px;height:551.25px;background:#d9d9d9;"></div>
<div class="a" style="left:1508px;top:295px;width:1px;height:551.25px;background:#d9d9d9;"></div>
<div class="a" style="left:1710px;top:295px;width:1px;height:551.25px;background:#d9d9d9;"></div>
<svg class="a" style="left:12px;top:304px" width="6" height="10" viewBox="0 0 6 10"><path d="M0.5 0.5L5.5 5L0.5 9.5Z" fill="#666"/></svg>
</body></html>
